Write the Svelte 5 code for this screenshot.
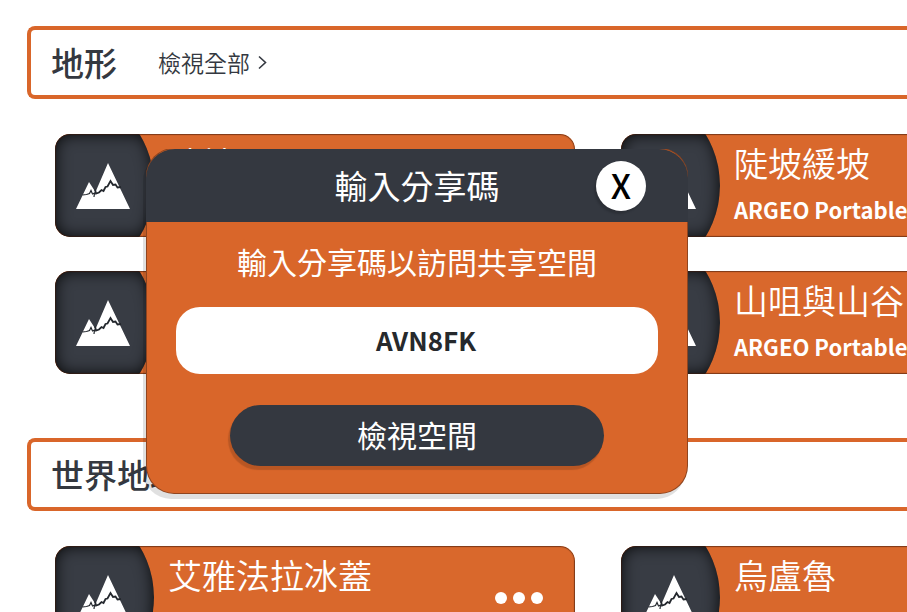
<script>
  const sections = [
    {
      title: '地形',
      more: true,
      cards: [
        { name: '陡坡', by: 'ARGEO Portable' },
        { name: '陡坡緩坡', by: 'ARGEO Portable' },
        { name: '山谷', by: 'ARGEO Portable' },
        { name: '山咀與山谷', by: 'ARGEO Portable' }
      ]
    },
    {
      title: '世界地理',
      more: false,
      cards: [
        { name: '艾雅法拉冰蓋', by: '' },
        { name: '烏盧魯', by: '' }
      ]
    }
  ];

  let code = $state('AVN8FK');
  let open = $state(true);
</script>

<main>
  {#each sections as section}
    <section>
      <header class="bar">
        <h2>{section.title}</h2>
        {#if section.more}
          <a href="#all">
            檢視全部
            <svg width="9" height="16" viewBox="0 0 9 16" aria-hidden="true">
              <path d="M1 2.500 7.500 8.500 1 14.500" fill="none" stroke="currentColor" stroke-width="1.600" />
            </svg>
          </a>
        {/if}
      </header>
      <div class="grid">
        {#each section.cards as card}
          <article class="card">
            <div class="tile">
              <svg width="54" height="48" viewBox="0 0 54 48" aria-hidden="true">
                <path d="M0 47 13 20l6.500 10L32 1l22 46z" fill="#fff" />
                <path
                  d="M6.500 33l4-.5 3-1 1.500-3 1.500 3.500 2-1-.5 4"
                  fill="none" stroke="#24282e" stroke-width="1.200" />
                <path
                  d="M19 27.500l1 4 3-1 2.500-2.500 2 1 2-4 2-.5 3-5.500 2.500 4 2.500-.5 2 3 3.500-.5"
                  fill="none" stroke="#24282e" stroke-width="1.800" />
              </svg>
            </div>
            <div class="text">
              <h3>{card.name}</h3>
              {#if card.by}<p>{card.by}</p>{/if}
            </div>
            <button class="dots" aria-label="更多"><i></i><i></i><i></i></button>
          </article>
        {/each}
      </div>
    </section>
  {/each}

  {#if open}
    <div class="dialog" role="dialog" aria-labelledby="dialog-title">
      <div class="head">
        <h1 id="dialog-title">輸入分享碼</h1>
        <button class="close" onclick={() => (open = false)}>X</button>
      </div>
      <form onsubmit={(e) => e.preventDefault()}>
        <label for="code">輸入分享碼以訪問共享空間</label>
        <input id="code" type="text" bind:value={code} />
        <button class="go" type="submit">檢視空間</button>
      </form>
    </div>
  {/if}
</main>

<style>
  :global(body) {
    background: #fff;
    overflow: hidden;
  }
  main {
    position: relative;
    height: 100vh;
    overflow: hidden;
    box-sizing: border-box;
    padding: 26px 0 0 27px;
    font-family: 'Noto Sans CJK TC', 'Noto Sans', sans-serif;
    color: #343840;
  }
  h1, h2, h3, p {
    margin: 0;
  }
  button, input {
    font-family: inherit;
    border: 0;
    padding: 0;
  }
  section {
    margin-bottom: 64px;
  }
  .bar {
    display: flex;
    align-items: center;
    gap: 41px;
    box-sizing: border-box;
    height: 73px;
    padding: 0 0 2px 20px;
    border: 4px solid #d9662a;
    border-right: 0;
    border-radius: 8px 0 0 8px;
  }
  h2 {
    font-size: 33px;
    line-height: 40px;
    font-weight: 500;
  }
  .bar a {
    display: flex;
    align-items: center;
    gap: 8px;
    color: inherit;
    font-size: 23px;
    line-height: 32px;
    font-weight: 350;
    text-decoration: none;
  }
  .grid {
    display: grid;
    grid-template-columns: repeat(2, 520px);
    gap: 34px 46px;
    padding: 35px 0 0 28px;
  }
  .card {
    position: relative;
    display: flex;
    gap: 14px;
    height: 103px;
    overflow: hidden;
    border-radius: 15px;
    background: #d9682c;
    color: #fff;
  }
  .card::after {
    content: '';
    position: absolute;
    inset: 0;
    border-radius: inherit;
    box-shadow: inset 0 0 1px 1px rgba(60, 25, 10, 0.6);
    pointer-events: none;
  }
  .tile {
    flex: none;
    display: flex;
    align-items: center;
    justify-content: center;
    box-sizing: border-box;
    width: 99px;
    padding-right: 3px;
    border-radius: 15px 16px 16px 15px / 15px 52px 52px 15px;
    background: #383c44;
    box-shadow: inset 0 0 16px rgba(0, 0, 0, 0.9);
    clip-path: circle(98px at 1px 50%);
  }
  .text {
    flex: 1;
    padding-top: 7px;
    white-space: nowrap;
  }
  h3 {
    height: 47px;
    font-size: 34px;
    line-height: 44px;
    font-weight: 350;
  }
  .text p {
    font-size: 22px;
    line-height: 42px;
    font-weight: 700;
  }
  .dots {
    display: flex;
    align-items: center;
    gap: 6px;
    margin-right: 32px;
    background: none;
  }
  .dots i {
    width: 12px;
    height: 12px;
    border-radius: 50%;
    background: #fff;
  }
  .dialog {
    position: absolute;
    left: 147px;
    top: 149px;
    width: 540px;
    border-radius: 27px;
    background: #d9662a;
    color: #fff;
    box-shadow: 0 0 0 1px #8f451f, -3px 5px 0 1px rgba(0, 0, 0, 0.12);
    clip-path: inset(0 -6px -10px -6px);
  }
  .head {
    position: relative;
    display: flex;
    align-items: center;
    justify-content: center;
    box-sizing: border-box;
    height: 73px;
    margin: 0 -1px;
    border-radius: 29px 29px 0 0;
    background: #343840;
  }
  h1 {
    font-size: 33px;
    line-height: 40px;
    padding-bottom: 1px;
    font-weight: 400;
  }
  .close {
    position: absolute;
    right: 42px;
    top: 12px;
    width: 50px;
    height: 50px;
    border-radius: 50%;
    background: #fff;
    color: #000;
    font-size: 34px;
    line-height: 48px;
    padding-bottom: 2px;
    font-weight: 500;
    box-shadow: -2px 3px 2px rgba(0, 0, 0, 0.15);
  }
  form {
    display: flex;
    flex-direction: column;
    align-items: center;
    padding: 17px 29px 27px;
  }
  label {
    font-size: 30px;
    line-height: 44px;
    font-weight: 400;
  }
  input {
    box-sizing: border-box;
    width: 100%;
    height: 67px;
    margin: 24px 0 31px;
    padding: 0 0 2px 18px;
    border-radius: 24px;
    background: #fff;
    color: #26292c;
    font-size: 26px;
    font-weight: 700;
    text-align: center;
  }
  .go {
    width: 374px;
    height: 61px;
    padding-bottom: 3px;
    border-radius: 31px;
    background: #343840;
    color: #fff;
    font-size: 30px;
    line-height: 58px;
    font-weight: 400;
    box-shadow: -2px 4px 1px rgba(0, 0, 0, 0.15);
  }
</style>
